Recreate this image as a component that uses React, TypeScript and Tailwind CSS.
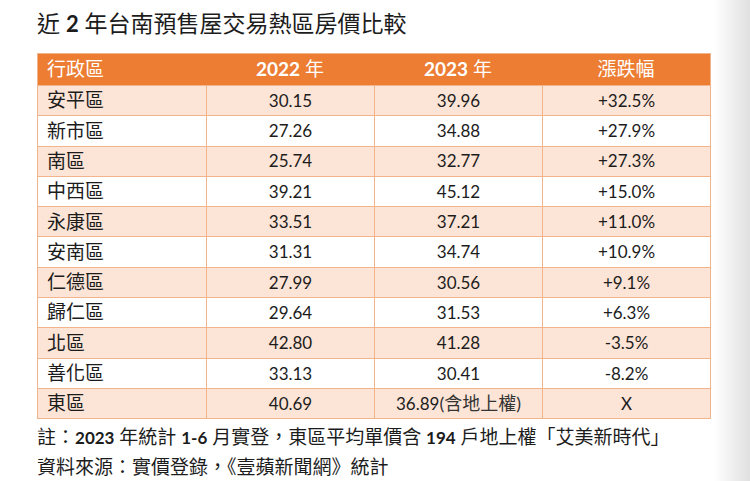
const rows: { name: string; y22: string; y23: string; note?: string; pct: string }[] = [
  { name: "安平區", y22: "30.15", y23: "39.96", pct: "+32.5%" },
  { name: "新市區", y22: "27.26", y23: "34.88", pct: "+27.9%" },
  { name: "南區", y22: "25.74", y23: "32.77", pct: "+27.3%" },
  { name: "中西區", y22: "39.21", y23: "45.12", pct: "+15.0%" },
  { name: "永康區", y22: "33.51", y23: "37.21", pct: "+11.0%" },
  { name: "安南區", y22: "31.31", y23: "34.74", pct: "+10.9%" },
  { name: "仁德區", y22: "27.99", y23: "30.56", pct: "+9.1%" },
  { name: "歸仁區", y22: "29.64", y23: "31.53", pct: "+6.3%" },
  { name: "北區", y22: "42.80", y23: "41.28", pct: "-3.5%" },
  { name: "善化區", y22: "33.13", y23: "30.41", pct: "-8.2%" },
  { name: "東區", y22: "40.69", y23: "36.89", note: "(含地上權)", pct: "X" },
];

const FONT = "font-['Lato','Noto_Sans_CJK_TC',sans-serif]";

export default function App() {
  return (
    <div className={`flex h-[481px] w-[750px] overflow-hidden bg-white text-[#1c1c1c] ${FONT}`}>
      <div className="flex-1 pl-[37px] pt-[8px]">
        <h1 className="h-[30px] text-[23px] leading-[30px] font-normal">
          近 <span className="text-[22px] font-bold">2</span> 年台南預售屋交易熱區房價比較
        </h1>

        <div className="mt-[15px] w-[674px] border border-[#f2b48a]">
          <div className="grid h-[31px] grid-cols-4 items-center bg-[#ec7d32] text-[19px] text-white">
            <div className="pl-[9px]">行政區</div>
            <div className="text-center">
              <span className="font-bold text-[19px]">2022</span> 年
            </div>
            <div className="text-center">
              <span className="font-bold text-[19px]">2023</span> 年
            </div>
            <div className="text-center">漲跌幅</div>
          </div>
          {rows.map((r, i) => (
            <div
              key={r.name}
              className={`grid h-[30.3px] grid-cols-4 border-t border-[#f2b48a] ${
                i % 2 === 0 ? "bg-[#fce4d6]" : "bg-white"
              }`}
            >
              <div className="flex items-center pl-[9px] text-[19px]">{r.name}</div>
              <div className="flex items-center justify-center border-l border-[#f2b48a] text-[17px]">{r.y22}</div>
              <div className="flex items-center justify-center border-l border-[#f2b48a] text-[17px]">
                {r.y23}
                {r.note && <span className="text-[18px] text-[#333]">{r.note}</span>}
              </div>
              <div className="flex items-center justify-center border-l border-[#f2b48a] text-[17px]">{r.pct}</div>
            </div>
          ))}
        </div>

        <div className="mt-[3px] text-[19px] leading-[29px]">
          <p>
            註：<span className="text-[17px] font-bold">2023</span> 年統計{" "}
            <span className="text-[17px] font-bold">1-6</span> 月實登，東區平均單價含{" "}
            <span className="text-[17px] font-bold">194</span> 戶地上權「艾美新時代」
          </p>
          <p>資料來源：實價登錄，《壹蘋新聞網》統計</p>
        </div>
      </div>
      <div className="w-[36px] bg-gradient-to-r from-white to-[#e0e0e0]" />
    </div>
  );
}
